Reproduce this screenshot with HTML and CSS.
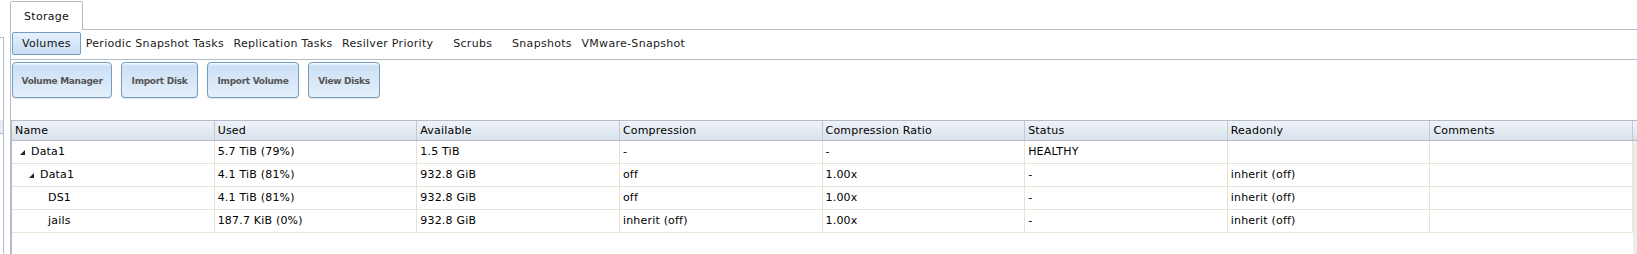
FILE: index.html
```html
<!DOCTYPE html>
<html>
<head>
<meta charset="utf-8">
<title>Storage</title>
<link rel="stylesheet" href="styles.css">
</head>
<body>
<div class="page">
  <div class="side"><div class="side-item"></div></div>
  <div class="main">
    <div class="tabbar">
      <div class="tab">Storage</div>
    </div>
    <div class="tabpane">
      <div class="subnav">
        <div class="subtab selected">Volumes</div>
        <div class="subtab">Periodic Snapshot Tasks</div>
        <div class="subtab">Replication Tasks</div>
        <div class="subtab">Resilver Priority</div>
        <div class="subtab wide">Scrubs</div>
        <div class="subtab">Snapshots</div>
        <div class="subtab">VMware-Snapshot</div>
      </div>
      <div class="content">
        <div class="toolbar">
          <button class="btn btn-vm">Volume Manager</button>
          <button class="btn btn-id">Import Disk</button>
          <button class="btn btn-iv">Import Volume</button>
          <button class="btn btn-vd">View Disks</button>
        </div>
        <div class="grid">
          <div class="grid-head">
            <div class="hcell">Name</div>
            <div class="hcell">Used</div>
            <div class="hcell">Available</div>
            <div class="hcell">Compression</div>
            <div class="hcell">Compression Ratio</div>
            <div class="hcell">Status</div>
            <div class="hcell">Readonly</div>
            <div class="hcell">Comments</div>
            <div class="hspacer"></div>
          </div>
          <div class="grid-body">
            <div class="rows">
              <div class="row">
                <div class="cell name lvl1"><svg class="expando" viewBox="0 0 5 5"><polygon points="5,0 5,5 0,5"/></svg>Data1</div>
                <div class="cell">5.7 TiB (79%)</div>
                <div class="cell">1.5 TiB</div>
                <div class="cell">-</div>
                <div class="cell">-</div>
                <div class="cell">HEALTHY</div>
                <div class="cell"></div>
                <div class="cell"></div>
              </div>
              <div class="row">
                <div class="cell name lvl2"><svg class="expando" viewBox="0 0 5 5"><polygon points="5,0 5,5 0,5"/></svg>Data1</div>
                <div class="cell">4.1 TiB (81%)</div>
                <div class="cell">932.8 GiB</div>
                <div class="cell">off</div>
                <div class="cell">1.00x</div>
                <div class="cell">-</div>
                <div class="cell">inherit (off)</div>
                <div class="cell"></div>
              </div>
              <div class="row">
                <div class="cell name lvl3">DS1</div>
                <div class="cell">4.1 TiB (81%)</div>
                <div class="cell">932.8 GiB</div>
                <div class="cell">off</div>
                <div class="cell">1.00x</div>
                <div class="cell">-</div>
                <div class="cell">inherit (off)</div>
                <div class="cell"></div>
              </div>
              <div class="row">
                <div class="cell name lvl3">jails</div>
                <div class="cell">187.7 KiB (0%)</div>
                <div class="cell">932.8 GiB</div>
                <div class="cell">inherit (off)</div>
                <div class="cell">1.00x</div>
                <div class="cell">-</div>
                <div class="cell">inherit (off)</div>
                <div class="cell"></div>
              </div>
            </div>
            <div class="scrollbar"></div>
          </div>
        </div>
      </div>
    </div>
  </div>
</div>
</body>
</html>
```
FILE: styles.css
```css
* { box-sizing: border-box; }
html, body { margin: 0; padding: 0; background: #fff; }
body {
  font-family: "DejaVu Sans", Verdana, sans-serif;
  font-size: 11px;
  letter-spacing: 0.2px;
  color: #000;
  overflow: hidden;
}
.page {
  display: flex;
  height: 254px;
}
.side {
  width: 4px;
  margin-top: 37px;
  margin-right: 6px;
  border-top: 1px solid #b5bcc7;
  border-right: 1px solid #b5bcc7;
}
.side-item {
  margin-top: 82px;
  height: 14px;
  background: #e3edf7;
  border-bottom: 1px solid #b5bcc7;
}
.main {
  flex: 1;
  min-width: 0;
  display: flex;
  flex-direction: column;
}
.tabbar {
  height: 30px;
  display: flex;
  align-items: flex-end;
  border-bottom: 1px solid #b5bcc7;
}
.tab {
  height: 29px;
  margin-bottom: -1px;
  padding: 2px 13px 0 13px;
  line-height: 26px;
  letter-spacing: 0.3px;
  background: #fff;
  border: 1px solid #b5bcc7;
  border-bottom: none;
  border-radius: 2px 2px 0 0;
  color: #111;
}
.tabpane {
  flex: 1;
  border-left: 1px solid #b5bcc7;
  display: flex;
  flex-direction: column;
}
.subnav {
  height: 30px;
  display: flex;
  align-items: flex-start;
  padding-left: 1px;
  border-bottom: 1px solid #b5bcc7;
}
.subtab {
  margin-top: 2px;
  height: 23px;
  line-height: 21px;
  padding: 0 3.8px;
  letter-spacing: 0.3px;
  border: 1px solid transparent;
  color: #222;
  white-space: nowrap;
}
.subtab.selected {
  padding: 0 9px;
  margin-right: 0.2px;
  border-color: #759dc0;
  border-radius: 2px;
  background: #cfe5fa linear-gradient(#e6f1fc, #c6ddf5);
  color: #111;
}
.subtab.wide { padding: 0 14px; }
.content {
  flex: 1;
  display: flex;
  flex-direction: column;
}
.toolbar {
  display: flex;
  gap: 9px;
  margin: 2px 0 0 1px;
}
.btn {
  height: 36px;
  padding: 1px 0 0 0;
  font-family: "DejaVu Sans", Verdana, sans-serif;
  font-size: 9px;
  font-weight: bold;
  letter-spacing: -0.3px;
  color: #555;
  border: 1px solid #759dc0;
  border-radius: 4px;
  background-color: #bfd9f3;
  background-image: linear-gradient(#ffffff 0px, rgba(255,255,255,0.2) 3px, rgba(255,255,255,0.6) 100%);
  box-shadow: 0 1px 1px rgba(0,0,0,0.12);
  text-align: center;
}
.btn-vm { width: 100px; }
.btn-id { width: 77px; }
.btn-iv { width: 92px; }
.btn-vd { width: 72px; }
.grid {
  margin-top: 22px;
  flex: 1;
  display: flex;
  flex-direction: column;
  border-left: 1px solid #b5bcc7;
}
.grid-head {
  display: grid;
  grid-template-columns: repeat(8, 1fr) 4px;
  border-top: 1px solid #b5bcc7;
  border-bottom: 1px solid #b5bcc7;
  background: linear-gradient(#eef3f8, #d9e3ec);
}
.hcell {
  height: 19px;
  line-height: 19px;
  padding: 0 3px;
  border-right: 1px solid #c2cbd5;
  white-space: nowrap;
  overflow: hidden;
}
.grid-body {
  flex: 1;
  display: flex;
}
.rows { flex: 1; }
.row {
  display: grid;
  grid-template-columns: repeat(8, 1fr);
  border-bottom: 1px solid #ebe2d6;
}
.cell {
  height: 22px;
  line-height: 22px;
  padding: 0 3px;
  border-right: 1px solid #ebe2d6;
  white-space: nowrap;
  overflow: hidden;
}
.scrollbar {
  width: 4px;
  background: #ececec;
}
.name.lvl1 { padding-left: 8px; }
.name.lvl2 { padding-left: 17px; }
.name.lvl3 { padding-left: 36px; }
.expando {
  display: inline-block;
  width: 5px;
  height: 5px;
  margin-right: 6px;
  vertical-align: 0;
  fill: #222;
}
```
